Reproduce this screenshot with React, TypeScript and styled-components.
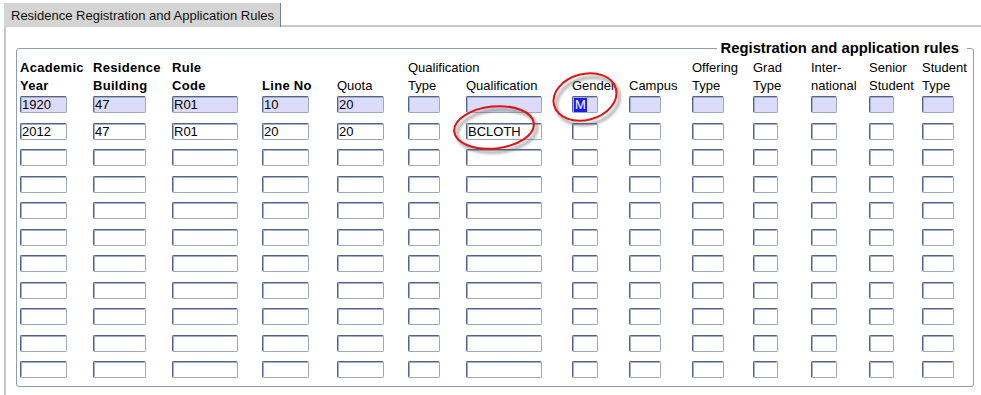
import React from "react";
import styled, { createGlobalStyle } from "styled-components";

const Global = createGlobalStyle`
  html, body { margin: 0; padding: 0; background: #ffffff; }
  body { font-family: "Liberation Sans", Arial, sans-serif; color: #000; }
`;

const Page = styled.div`
  position: relative;
  width: 981px;
  height: 395px;
  box-sizing: border-box;
  padding: 3px 0 0 4px;
  display: flex;
  flex-direction: column;
  overflow: hidden;
`;

const TabStrip = styled.div`
  display: flex;
  height: 24px;
`;

const Tab = styled.div`
  box-sizing: border-box;
  height: 24px;
  padding: 5px 6px 0 7px;
  background: #d4d4d4;
  border-right: 1px solid #6e7f9b;
  font-size: 13px;
  line-height: 15px;
  white-space: nowrap;
  color: #111;
`;

const TabFiller = styled.div`
  flex: 1;
  box-sizing: border-box;
  height: 24px;
  border-bottom: 2px solid #c8c8c8;
`;

const Panel = styled.div`
  flex: 1;
  border-left: 2px solid #c8c8c8;
  padding: 21px 7px 0 10px;
`;

const GroupBox = styled.div`
  position: relative;
  border: 1px solid #8d9db6;
  border-radius: 3px;
  padding: 10px 0 8px 3px;
`;

const GroupTitle = styled.div`
  position: absolute;
  top: -8px;
  right: 6px;
  padding: 0 8px 0 4px;
  background: #ffffff;
  font-weight: bold;
  font-size: 14.8px;
  line-height: 15px;
  white-space: nowrap;
`;

const COLS = "73px 79px 90px 75px 71px 58px 106px 57px 63px 61px 58px 58px 53px 1fr";

const HeaderRow = styled.div`
  display: grid;
  grid-template-columns: ${COLS};
  height: 36px;
`;

const HeaderCell = styled.div<{ $bold?: boolean }>`
  display: flex;
  flex-direction: column;
  justify-content: flex-end;
  font-size: 13px;
  line-height: 18px;
  white-space: nowrap;
  font-weight: ${(p) => (p.$bold ? "bold" : "normal")};
  letter-spacing: ${(p) => (p.$bold ? "0.3px" : "0")};
`;

const Rows = styled.div`
  display: flex;
  flex-direction: column;
  gap: 9.5px;
  margin-top: 1px;
`;

const Row = styled.div`
  display: grid;
  grid-template-columns: ${COLS};
`;

const Field = styled.div<{ $w: number; $current?: boolean }>`
  box-sizing: border-box;
  width: ${(p) => p.$w}px;
  height: 17px;
  padding: 1px 1px 0 1px;
  border: 1px solid;
  border-color: #52648a #9ea8b9 #9ea8b9 #52648a;
  border-radius: 2px;
  box-shadow: inset 1px 1px 0 #a4afc4;
  background: ${(p) => (p.$current ? "#dcdcfa" : "#ffffff")};
  font-size: 13px;
  line-height: 14px;
  white-space: nowrap;
  overflow: hidden;
`;

const Selected = styled.span`
  display: inline-block;
  background: #1c1cf0;
  color: #ffffff;
  padding: 0 1px;
  line-height: 14px;
`;

const Overlay = styled.svg`
  position: absolute;
  left: 0;
  top: 0;
  pointer-events: none;
`;

type Col = { w: number; l1: string; l2: string; bold?: boolean };

const columns: Col[] = [
  { w: 47, l1: "Academic", l2: "Year", bold: true },
  { w: 53, l1: "Residence", l2: "Building", bold: true },
  { w: 66, l1: "Rule", l2: "Code", bold: true },
  { w: 47, l1: "", l2: "Line No", bold: true },
  { w: 47, l1: "", l2: "Quota" },
  { w: 32, l1: "Qualification", l2: "Type" },
  { w: 76, l1: "", l2: "Qualification" },
  { w: 26, l1: "", l2: "Gender" },
  { w: 32, l1: "", l2: "Campus" },
  { w: 32, l1: "Offering", l2: "Type" },
  { w: 25, l1: "Grad", l2: "Type" },
  { w: 26, l1: "Inter-", l2: "national" },
  { w: 25, l1: "Senior", l2: "Student" },
  { w: 32, l1: "Student", l2: "Type" },
];

const data: string[][] = [
  ["1920", "47", "R01", "10", "20", "", "", "M", "", "", "", "", "", ""],
  ["2012", "47", "R01", "20", "20", "", "BCLOTH", "", "", "", "", "", "", ""],
];

const ROW_COUNT = 11;

export default function App() {
  const rows = Array.from({ length: ROW_COUNT }, (_, r) => data[r] ?? columns.map(() => ""));
  return (
    <>
      <Global />
      <Page>
        <TabStrip>
          <Tab>Residence Registration and Application Rules</Tab>
          <TabFiller />
        </TabStrip>
        <Panel>
          <GroupBox>
            <GroupTitle>Registration and application rules</GroupTitle>
            <HeaderRow>
              {columns.map((c, i) => (
                <HeaderCell key={i} $bold={c.bold}>
                  <span>{c.l1 || "\u00a0"}</span>
                  <span>{c.l2}</span>
                </HeaderCell>
              ))}
            </HeaderRow>
            <Rows>
              {rows.map((vals, r) => (
                <Row key={r}>
                  {columns.map((c, i) => (
                    <div key={i}>
                      <Field $w={c.w} $current={r === 0}>
                        {r === 0 && i === 7 ? <Selected>{vals[i]}</Selected> : vals[i]}
                      </Field>
                    </div>
                  ))}
                </Row>
              ))}
            </Rows>
          </GroupBox>
        </Panel>
        <Overlay width={981} height={395} viewBox="0 0 981 395">
          <defs>
            <filter id="sh" x="-20%" y="-20%" width="140%" height="160%">
              <feGaussianBlur stdDeviation="1.8" />
            </filter>
          </defs>
          <g filter="url(#sh)" opacity="0.55">
            <ellipse cx={588} cy={101} rx={32} ry={23} fill="none" stroke="#666" strokeWidth={3} transform="rotate(-15 588 101)" />
            <ellipse cx={497} cy={131} rx={40} ry={21} fill="none" stroke="#666" strokeWidth={3} transform="rotate(-6 497 131)" />
          </g>
          <ellipse cx={585} cy={97} rx={32} ry={23} fill="none" stroke="#e01414" strokeWidth={2} transform="rotate(-15 585 97)" />
          <ellipse cx={494} cy={127.5} rx={40} ry={21} fill="none" stroke="#e01414" strokeWidth={2} transform="rotate(-6 494 127.5)" />
        </Overlay>
      </Page>
    </>
  );
}
